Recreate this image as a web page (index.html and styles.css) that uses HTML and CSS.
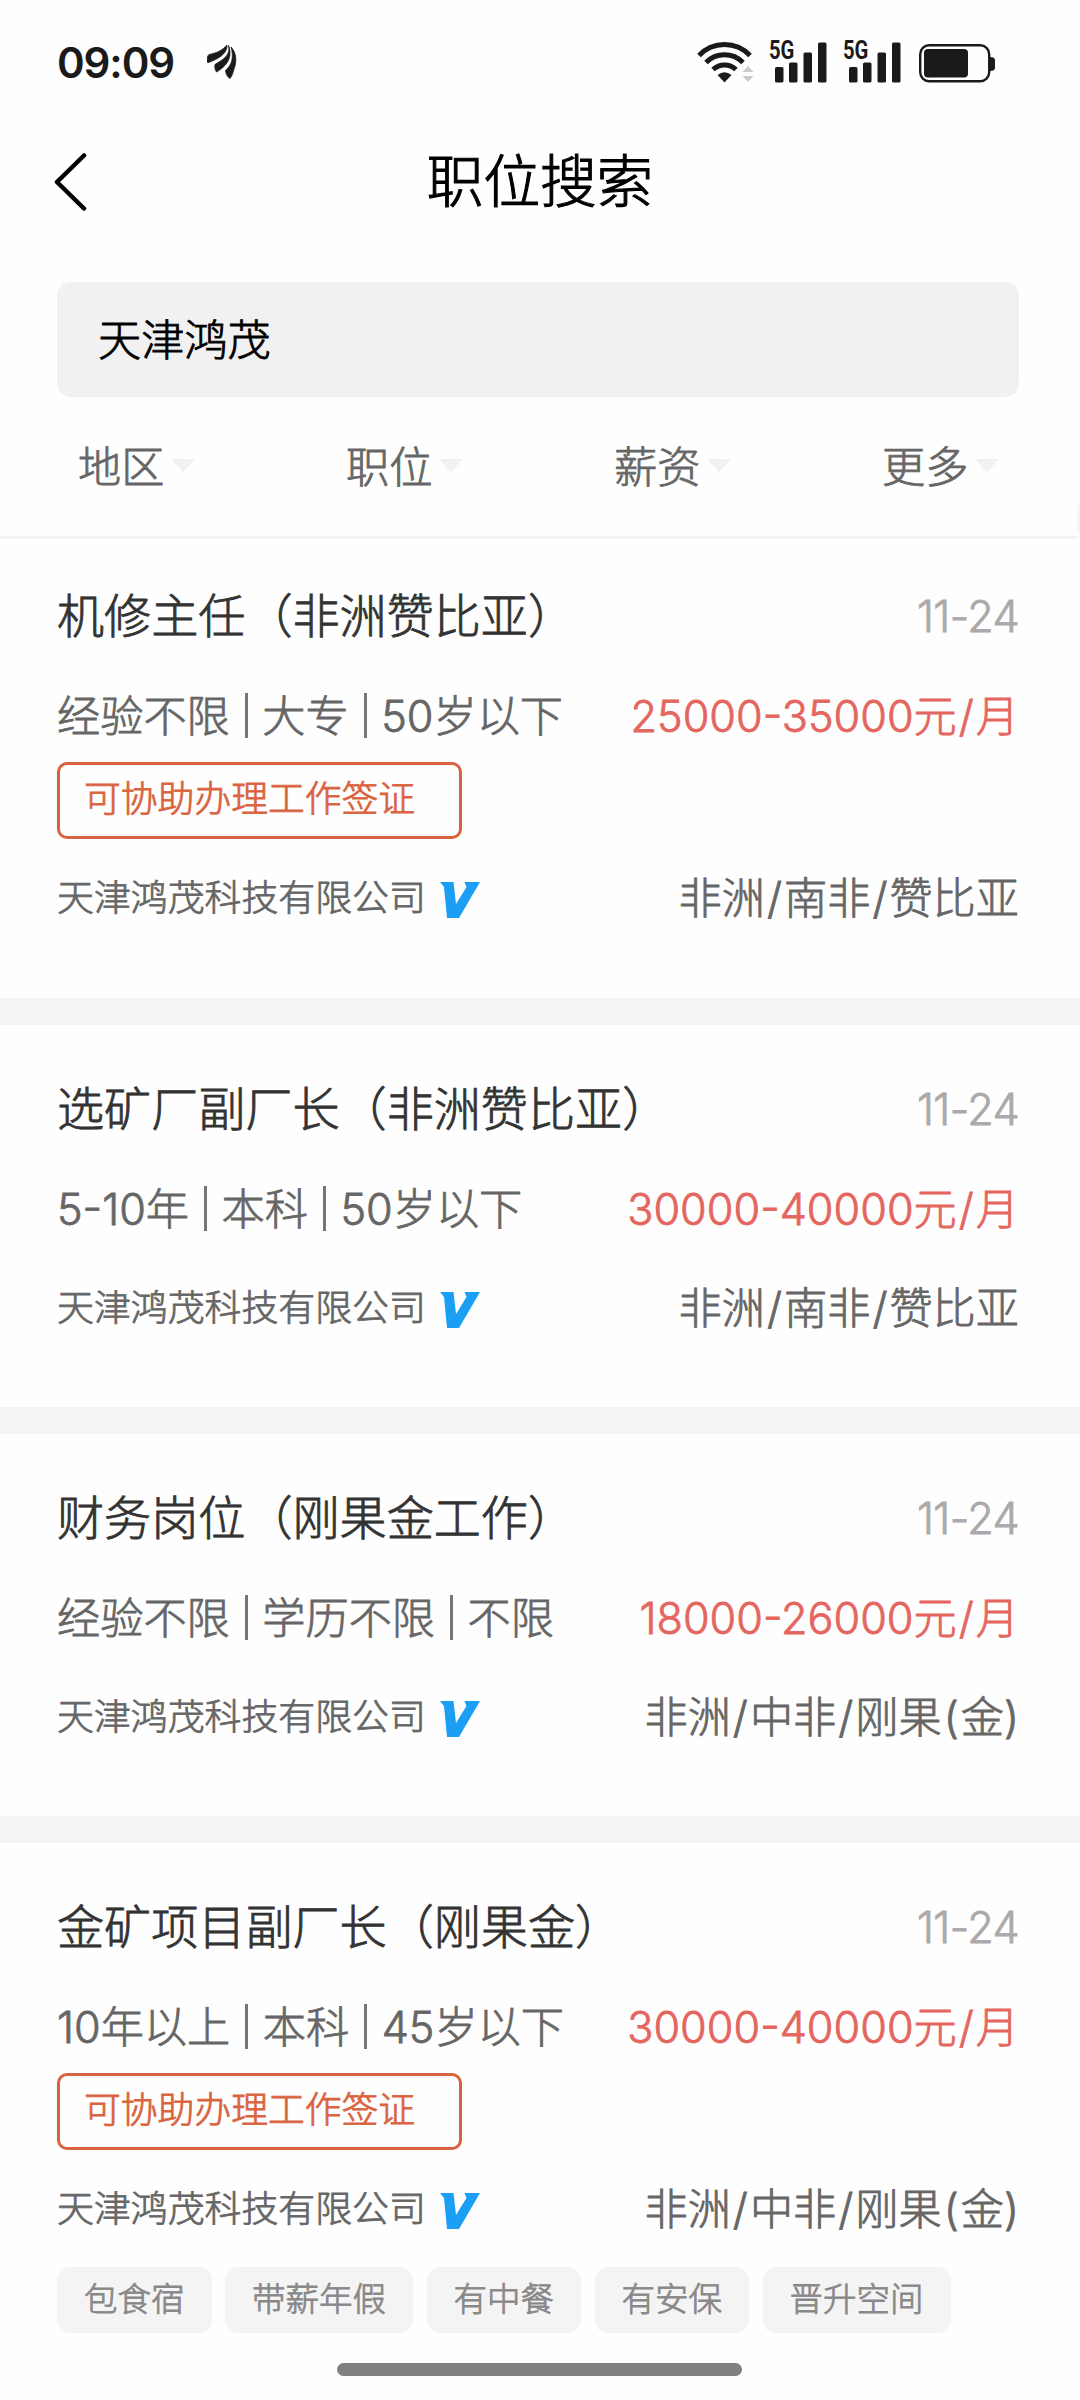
FILE: index.html
```html
<!DOCTYPE html>
<html lang="zh-CN">
<head>
    <meta charset="UTF-8">
    <meta name="viewport" content="width=device-width, initial-scale=1.0">
    <title>职位搜索</title>
    <link rel="stylesheet" href="styles.css">
</head>
<body>
    <div class="statusbar">
        <span class="time">09:09</span>
        <svg class="app" width="30" height="34" viewBox="0 0 30 34">
            <path d="M2 9.500C9 8 15 6 20 0C20.500 9 11 14 1.500 17.500L0 17C0 14 0 11 2 9.500Z"/>
            <path d="M21.500 .5C24 11 15 15 8 19.500C7.500 22 8 25 9.500 27C18 22 26.500 14 21.500 .5Z"/>
            <path d="M24 2C29.500 8 30 16 27 24C26 28 25 31 23 33.500C20.500 32 19 29.500 18.500 25.500C25 20 27 12 24 2Z"/>
        </svg>
        <div class="icons">
            <svg class="wifi" width="58" height="42" viewBox="0 0 58 42">
                <g fill="none" stroke="#1a1a1a" stroke-width="5">
                    <path d="M3 14.500A35 35 0 0 1 54 14.500"/>
                    <path d="M10 21.500A26 26 0 0 1 47 21.500"/>
                    <path d="M17 28.500A17 17 0 0 1 40 28.500"/>
                </g>
                <path d="M21.500 34Q28.500 28.500 35.500 34L28.500 41.500Z"/>
                <path d="M46.500 31L52 25L57.500 31ZM46.500 35H57.500L52 41Z" fill="#ccc"/>
            </svg>
            <div class="sig">
                <span class="net">5G</span>
                <svg width="58" height="42" viewBox="0 0 58 42">
                    <rect x="6" y="26" width="8.500" height="15.500" rx="1.500"/>
                    <rect x="20" y="21.500" width="8.500" height="20" rx="1.500"/>
                    <rect x="34.500" y="11.500" width="8.500" height="30" rx="1.500"/>
                    <rect x="49" y="1.500" width="8.500" height="40" rx="1.500"/>
                </svg>
            </div>
            <div class="sig">
                <span class="net">5G</span>
                <svg width="58" height="42" viewBox="0 0 58 42">
                    <rect x="6" y="26" width="8.500" height="15.500" rx="1.500"/>
                    <rect x="20" y="21.500" width="8.500" height="20" rx="1.500"/>
                    <rect x="34.500" y="11.500" width="8.500" height="30" rx="1.500"/>
                    <rect x="49" y="1.500" width="8.500" height="40" rx="1.500"/>
                </svg>
            </div>
            <svg class="battery" width="77" height="42" viewBox="0 0 77 42">
                <rect x="1.200" y="4.200" width="69" height="36" rx="9" fill="none" stroke="#1a1a1a" stroke-width="2.400"/>
                <rect x="5" y="8" width="44" height="28.500" rx="4"/>
                <path d="M71 16Q76 16 76 19V27Q76 30 71 30Z"/>
            </svg>
        </div>
    </div>

    <div class="navbar">
        <svg class="back" width="34" height="58" viewBox="0 0 34 58">
            <path d="M30 2.500L3 29L30 55.500" fill="none" stroke="#000" stroke-width="4.500" stroke-linecap="round" stroke-linejoin="round"/>
        </svg>
        <h1>职位搜索</h1>
    </div>

    <div class="search">天津鸿茂</div>

    <div class="filters">
        <div class="filter">地区<i></i></div>
        <div class="filter">职位<i></i></div>
        <div class="filter">薪资<i></i></div>
        <div class="filter">更多<i></i></div>
    </div>

    <div class="list">
        <div class="job">
            <div class="row top"><h2>机修主任（非洲赞比亚）</h2><span class="date">11-24</span></div>
            <div class="row meta"><span>经验不限<b></b>大专<b></b>50岁以下</span><span class="salary">25000-35000元<em>/</em>月</span></div>
            <div class="visa">可协助办理工作签证</div>
            <div class="row corp"><span class="name">天津鸿茂科技有限公司</span><svg class="vip" width="40" height="36" viewBox="0 0 40 36"><path d="M0 0H13.500L16 22L26.500 5L24.500 0H40L19 36H7L4 5Z"/></svg><span class="place">非洲<em>/</em>南非<em>/</em>赞比亚</span></div>
        </div>
        <div class="job">
            <div class="row top"><h2>选矿厂副厂长（非洲赞比亚）</h2><span class="date">11-24</span></div>
            <div class="row meta"><span>5-10年<b></b>本科<b></b>50岁以下</span><span class="salary">30000-40000元<em>/</em>月</span></div>
            <div class="row corp"><span class="name">天津鸿茂科技有限公司</span><svg class="vip" width="40" height="36" viewBox="0 0 40 36"><path d="M0 0H13.500L16 22L26.500 5L24.500 0H40L19 36H7L4 5Z"/></svg><span class="place">非洲<em>/</em>南非<em>/</em>赞比亚</span></div>
        </div>
        <div class="job">
            <div class="row top"><h2>财务岗位（刚果金工作）</h2><span class="date">11-24</span></div>
            <div class="row meta"><span>经验不限<b></b>学历不限<b></b>不限</span><span class="salary">18000-26000元<em>/</em>月</span></div>
            <div class="row corp"><span class="name">天津鸿茂科技有限公司</span><svg class="vip" width="40" height="36" viewBox="0 0 40 36"><path d="M0 0H13.500L16 22L26.500 5L24.500 0H40L19 36H7L4 5Z"/></svg><span class="place">非洲<em>/</em>中非<em>/</em>刚果<em>(</em>金)</span></div>
        </div>
        <div class="job">
            <div class="row top"><h2>金矿项目副厂长（刚果金）</h2><span class="date">11-24</span></div>
            <div class="row meta"><span>10年以上<b></b>本科<b></b>45岁以下</span><span class="salary">30000-40000元<em>/</em>月</span></div>
            <div class="visa">可协助办理工作签证</div>
            <div class="row corp"><span class="name">天津鸿茂科技有限公司</span><svg class="vip" width="40" height="36" viewBox="0 0 40 36"><path d="M0 0H13.500L16 22L26.500 5L24.500 0H40L19 36H7L4 5Z"/></svg><span class="place">非洲<em>/</em>中非<em>/</em>刚果<em>(</em>金)</span></div>
            <div class="tags">
                <span>包食宿</span>
                <span>带薪年假</span>
                <span>有中餐</span>
                <span>有安保</span>
                <span>晋升空间</span>
            </div>
        </div>
    </div>

    <div class="scrollbar"></div>
    <div class="homebar"></div>
</body>
</html>
```

FILE: styles.css
```css
html, body{
    margin: 0;
    padding: 0;
}
body{
    position: relative;
    width: 1080px;
    height: 2400px;
    overflow: hidden;
    background-color: #fefefe;
    color: #666;
    font-family: Inter, "Noto Sans CJK SC", sans-serif;
    font-size: 43.2px;
    font-weight: 300;
    -webkit-text-stroke: .8px;
}
h1, h2{
    margin: 0;
    font-weight: inherit;
}

/* 状态栏 */
.statusbar{
    display: flex;
    align-items: center;
    box-sizing: border-box;
    height: 124px;
    padding: 0 84px 0 57px;
    color: #1a1a1a;
    fill: #1a1a1a;
    -webkit-text-stroke: 0;
}
.statusbar .time{
    width: 118px;
    font-size: 42px;
    font-weight: 600;
    letter-spacing: -1.1px;
}
.statusbar .app{
    margin-left: 32px;
    stroke: #1a1a1a;
    stroke-width: .8px;
}
.statusbar .icons{
    display: flex;
    margin-left: auto;
}
.statusbar .wifi{
    margin-right: -1px;
}
.statusbar .sig{
    position: relative;
    height: 42px;
    margin-left: 16px;
}
.statusbar .battery{
    margin-left: 18px;
}
/* 信号格左上角的网络标识 */
.net{
    position: absolute;
    top: -5px;
    left: 0;
    font-family: Roboto, sans-serif;
    font-size: 25px;
    font-weight: 700;
    line-height: 30px;
    transform: scaleX(.81);
    transform-origin: left;
}

/* 导航栏 */
.navbar{
    display: flex;
    align-items: center;
    height: 116px;
    padding: 0 54px;
    color: #000;
}
.navbar h1{
    flex: 1;
    margin-right: 34px;
    font-size: 56.600px;
    line-height: 80px;
    text-align: center;
    -webkit-text-stroke: 1.1px;
}

/* 搜索框 */
.search{
    height: 115px;
    margin: 42px 61px 0 57px;
    padding-left: 41px;
    border-radius: 14px;
    background-color: #f1f1f1;
    color: #000;
    line-height: 116px;
}

/* 筛选 */
.filters{
    display: flex;
    box-sizing: border-box;
    width: 1077px;
    height: 142px;
    padding-left: 78px;
    border-bottom: 3px solid #f4f4f4;
}
.filter{
    display: flex;
    align-items: center;
    flex: 0 0 268px;
    height: 133px;
}
.filter:last-child{
    flex-basis: 180px;
}
.filter i{
    margin: 4px 0 0 7px;
    border: 12px solid transparent;
    border-top: 13px solid #f1f1f1;
    border-bottom: 0;
}

/* 职位列表 */
.job{
    padding: 54px 61px 69px 57px;
    border-bottom: 27px solid #f4f4f4;
}
.job:first-child{
    padding-top: 47px;
    padding-bottom: 70px;
}
.job:last-child{
    border-bottom: 0;
}
.row{
    display: flex;
    align-items: center;
    justify-content: space-between;
    height: 60px;
    line-height: 60px;
    white-space: nowrap;
}
.row em{
    padding: 0 2px;
    font-style: normal;
}
.top{
    margin-bottom: 40px;
}
.top h2{
    color: #333;
    font-size: 47.100px;
}
.date{
    color: #aaa;
    letter-spacing: -.6px;
}
.meta b{
    display: inline-block;
    width: 3px;
    height: 45px;
    margin: 0 14.500px 0 15px;
    background-color: #777;
    vertical-align: -6px;
}
.salary{
    color: #e4665f;
}
.visa{
    box-sizing: border-box;
    width: 405px;
    height: 77px;
    margin: 16px 0 -10px;
    padding-left: 24px;
    border: 3px solid #d9633f;
    border-radius: 10px;
    color: #d9633f;
    font-size: 36.800px;
    line-height: 68px;
}
.corp{
    margin-top: 39px;
}
.corp .name{
    font-size: 36.900px;
}
.corp .vip{
    margin: 3px 0 0 14px;
    fill: #1a9ff5;
}
.corp .place{
    margin-left: auto;
    line-height: 62px;
}
.tags{
    display: flex;
    margin-top: 28px;
}
.tags span{
    height: 66px;
    margin-right: 13.500px;
    padding: 0 27px;
    border-radius: 13px;
    background-color: #f4f4f4;
    color: #888;
    font-size: 33.500px;
    line-height: 65px;
}

/* 浮层 */
.scrollbar{
    position: absolute;
    top: 505px;
    right: 0;
    width: 3px;
    height: 27px;
    background-color: #f4f4f4;
}
.homebar{
    position: absolute;
    top: 2363px;
    left: 337px;
    width: 405px;
    height: 13px;
    border-radius: 7px;
    background-color: #808080;
}
```
